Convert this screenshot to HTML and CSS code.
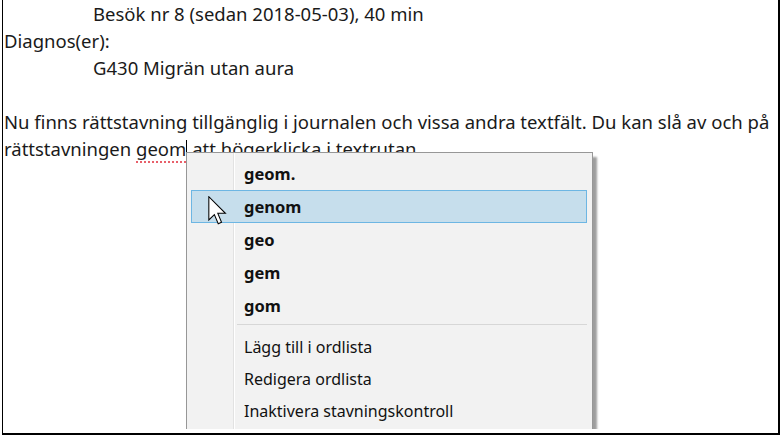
FILE: index.html
```html
<!DOCTYPE html>
<html lang="sv">
<head>
<meta charset="utf-8">
<link rel="stylesheet" href="styles.css">
</head>
<body>
<div class="frame">
  <div class="screen">
    <div class="doc">
      <div class="line indent">Besök nr 8 (sedan 2018-05-03), 40 min</div>
      <div class="line">Diagnos(er):</div>
      <div class="line indent">G430 Migrän utan aura</div>
      <div class="line blank"></div>
      <div class="line">Nu finns rättstavning tillgänglig i journalen och vissa andra textfält. Du kan slå av och på</div>
      <div class="line">rättstavningen <span class="misspelled">geom</span><span class="caret"></span> att högerklicka i textrutan</div>
    </div>

    <div class="menu">
      <div class="item bold">geom.</div>
      <div class="item bold hover">genom</div>
      <div class="item bold">geo</div>
      <div class="item bold">gem</div>
      <div class="item bold">gom</div>
      <div class="sep"></div>
      <div class="item plain">Lägg till i ordlista</div>
      <div class="item plain">Redigera ordlista</div>
      <div class="item plain">Inaktivera stavningskontroll</div>
    </div>

    <svg class="pointer" width="19" height="29" viewBox="0 0 12.6 19.4">
      <path d="M0.5 0.5 L0.5 16 L4.2 12.4 L6.8 18.6 L9 17.6 L6.5 11.6 L11.6 11.6 Z" fill="#fff" stroke="#000" stroke-width="0.7" stroke-linejoin="miter"/>
    </svg>
  </div>
</div>
</body>
</html>
```
FILE: styles.css
```css
html, body {
  margin: 0;
  padding: 0;
  background: #fff;
}

.frame {
  margin-left: 2px;
  width: 775px;
  height: 433px;
  border-style: solid;
  border-color: #000;
  border-width: 0 2px 2px 1px;
}

.screen {
  position: relative;
  height: 429px;
  overflow: hidden;
  background: #fff;
}

.doc {
  padding-left: 1px;
  font-family: "Noto Sans", "Open Sans", sans-serif;
  font-size: 18.5px;
  color: #1a1a1a;
}

.line {
  height: 27px;
  line-height: 27px;
  white-space: nowrap;
}

.indent {
  padding-left: 89px;
}

.misspelled {
  text-decoration: underline dotted #e8606a;
  text-decoration-thickness: 2px;
  text-underline-offset: 5px;
}

.caret {
  display: inline-block;
  width: 1px;
  height: 22px;
  background: #000;
  vertical-align: -6px;
}

.menu {
  position: absolute;
  left: 183px;
  top: 152px;
  width: 407px;
  box-sizing: border-box;
  padding: 4px 5px 4px 4px;
  border: 1px solid #979797;
  background: linear-gradient(to right, #f2f2f2 46px, #e2e2e2 46px, #e2e2e2 47px, #fff 47px, #fff 48px, #f2f2f2 48px);
  box-shadow: 4px 5px 2px rgba(0, 0, 0, 0.38);
  font-family: "Noto Sans", "Open Sans", sans-serif;
  font-size: 16px;
  color: #111;
}

.item {
  border: 1px solid transparent;
  padding-left: 52px;
  white-space: nowrap;
}

.item.bold {
  height: 31px;
  line-height: 31px;
  font-weight: 700;
  font-size: 16.5px;
}

.item.plain {
  height: 30px;
  line-height: 30px;
}

.item.hover {
  background: #c6deec;
  border-color: #6db6e3;
}

.sep {
  height: 1px;
  margin: 2px 0 6px 46px;
  background: #d7d7d7;
}

.pointer {
  position: absolute;
  left: 205px;
  top: 196px;
}
```
